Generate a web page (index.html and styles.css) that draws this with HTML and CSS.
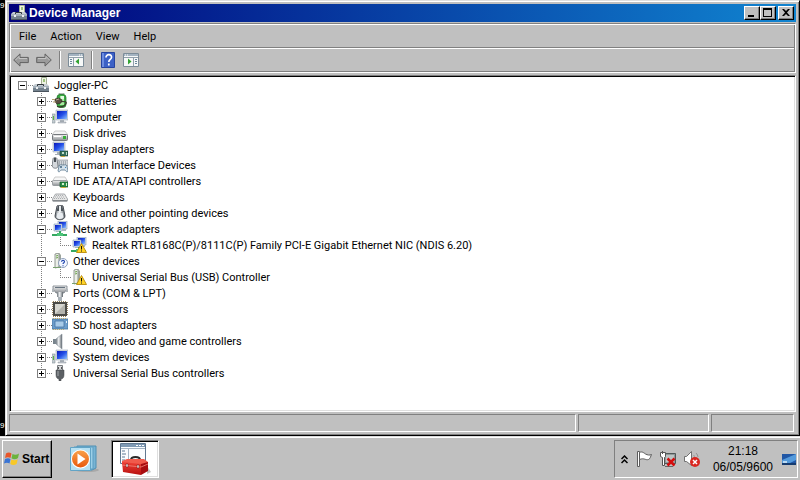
FILE: index.html
```html
<!DOCTYPE html>
<html lang="en">
<head>
    <meta charset="UTF-8">
    <meta name="viewport" content="width=device-width, initial-scale=1.0">
    <title>Device Manager</title>
    <link rel="stylesheet" href="styles.css">
</head>
<body>
    <!-- Icon definitions -->
    <svg class="defs" aria-hidden="true">
        <defs>
            <linearGradient id="screen" x1="0" y1="0" x2="1" y2="1">
                <stop offset="0" stop-color="#0a18b8"/><stop offset=".5" stop-color="#2450e8"/><stop offset="1" stop-color="#8fc4ff"/>
            </linearGradient>
            <linearGradient id="metal" x1="0" y1="0" x2="0" y2="1">
                <stop offset="0" stop-color="#f4f4f4"/><stop offset="1" stop-color="#8c9094"/>
            </linearGradient>
            <linearGradient id="steel" x1="0" y1="0" x2="1" y2="0">
                <stop offset="0" stop-color="#70787e"/><stop offset=".45" stop-color="#f2f4f6"/><stop offset="1" stop-color="#5c646a"/>
            </linearGradient>
            <linearGradient id="orange" x1="0" y1="0" x2="0" y2="1">
                <stop offset="0" stop-color="#f9a04a"/><stop offset="1" stop-color="#e8590c"/>
            </linearGradient>
            <linearGradient id="red" x1="0" y1="0" x2="0" y2="1">
                <stop offset="0" stop-color="#ee4136"/><stop offset="1" stop-color="#b80f0f"/>
            </linearGradient>
        </defs>
        <symbol id="i-root" viewBox="0 0 16 16">
            <path d="M8.500.5h5v7h-5z" fill="#eef2e4" stroke="#a4b094"/><path d="M10 2h2v3h-2z" fill="#9cc47c"/>
            <path d="M2 7h12l2 2H0z" fill="#c4ccd2"/>
            <path d="M4.500 9V7.500h6V9" fill="none" stroke="#30363c"/>
            <path d="M0 9h16v6H0z" fill="#73818d"/><path d="M0 9h16v2H0z" fill="#a4b0ba"/><path d="M0 14h16v1H0z" fill="#4a545e"/>
            <path d="M3 10h2v2H3zM11 10h2v2h-2z" fill="#eef0f2"/>
        </symbol>
        <symbol id="i-battery" viewBox="0 0 16 16">
            <path d="M7 0h5v2H7z" fill="#c8d4c8" stroke="#708070" stroke-width=".5"/>
            <rect x="5" y="1.500" width="9" height="13" rx="3" fill="#3aac42" stroke="#1d6c24" stroke-width=".7"/>
            <path d="M8 3h4v9H8z" fill="#a8eaa0"/><path d="M9 3h3v3H9z" fill="#e4f8e0"/>
            <path d="M3 6l4-1 3 2-1 3-4 1-2-2z" fill="#5b5044" stroke="#2c241c" stroke-width=".6"/>
            <path d="M0 6.500h3M1 9h3" stroke="#b4a070"/><path d="M9 8.500c4 0 6 0 5 2s-4 4-9 3" fill="none" stroke="#3b342c" stroke-width="1.200"/>
            <path d="M4 7l3-1" stroke="#b4a894"/>
        </symbol>
        <symbol id="i-computer" viewBox="0 0 16 16">
            <path d="M4 1h12v10H4z" fill="#d4dae2" stroke="#9ca8b8" stroke-width=".6"/><path d="M5 2h10v8H5z" fill="url(#screen)"/>
            <path d="M8 11h4v2H8z" fill="#a8b0b8"/><path d="M6 13h8v1H6z" fill="#ced4da" stroke="#8c969e" stroke-width=".5"/>
            <path d="M0 5h3v9H0z" fill="#c4ccd0" stroke="#88949c" stroke-width=".6"/><path d="M1 7h1v4H1z" fill="#58b440"/>
        </symbol>
        <symbol id="i-disk" viewBox="0 0 16 16">
            <path d="M3 6h10l3 4H0z" fill="#f4f4f4" stroke="#b8b8b8" stroke-width=".7"/>
            <rect x=".5" y="9.500" width="15" height="6" rx="1" fill="url(#metal)" stroke="#74787c"/>
            <path d="M11 11h3v3h-3z" fill="#38b038"/><path d="M2 11.500h7" stroke="#fff"/>
        </symbol>
        <symbol id="i-display" viewBox="0 0 16 16">
            <path d="M1 1h12v10H1z" fill="#d4dae2" stroke="#9ca8b8" stroke-width=".6"/><path d="M2 2h10v8H2z" fill="url(#screen)"/>
            <path d="M5 11h4v2H5zM3 13h6v1H3z" fill="#a8b0b8"/>
            <path d="M8 10h8v5H8z" fill="#35715c" stroke="#153e30" stroke-width=".6"/><path d="M10 11h2v2h-2zM14 11h1v3h-1z" fill="#c0dccc"/><path d="M9 15h4v1H9z" fill="#c8a840"/>
        </symbol>
        <symbol id="i-hid" viewBox="0 0 16 16">
            <path d="M6 3h10v6H6z" fill="#d2d6da" stroke="#7c848c" stroke-width=".6"/><path d="M7 5h8M7 7h8" stroke="#7c848c" stroke-dasharray="1 1"/>
            <path d="M1 2c0-2 4-2 4 0l1 7c0 3-5 3-6 0z" fill="#d4d8dc" stroke="#666c72" stroke-width=".8"/><path d="M2 1h2v4H2z" fill="#4a5056"/>
            <path d="M7 9c1-2 2-1 4-1s3-1 4 1l1 5c-1 2-2 0-3-1H9c-1 1-2 3-3 1z" fill="#d2e0ea" stroke="#58758c" stroke-width=".8"/>
            <path d="M8 10h2M9 9v2" stroke="#3e607c"/><path d="M13 10h1v1h-1z" fill="#4488c0"/>
        </symbol>
        <symbol id="i-ide" viewBox="0 0 16 16">
            <path d="M3 4h10l3 5H0z" fill="#f6f6f6" stroke="#b8b8b8" stroke-width=".7"/>
            <rect x=".5" y="7.500" width="15" height="5" rx="1" fill="url(#metal)" stroke="#8c9094" stroke-width=".8"/>
            <path d="M8 9h8v5H8z" fill="#2a9048" stroke="#145428" stroke-width=".7"/><path d="M10 10h2v2h-2zM14 10h1v3h-1z" fill="#d4f0d0"/><path d="M9 14h5v1H9z" fill="#c8b040"/>
        </symbol>
        <symbol id="i-keyboard" viewBox="0 0 16 16">
            <path d="M3.500 5h9l3 5v2H.5v-2z" fill="#e6e6e6" stroke="#94989c" stroke-width=".8"/><path d="M1 11h14v1.500H1z" fill="#84888c"/>
            <path d="M4 6.500h8M3 8h10M2 9.500h12" stroke="#a4a8ac" stroke-dasharray="1 1" stroke-width=".9"/>
        </symbol>
        <symbol id="i-mouse" viewBox="0 0 16 16">
            <path d="M5 1c1-1 5-1 6 0l2 10c0 5-10 5-10 0z" fill="url(#steel)" stroke="#3c4248" stroke-width=".9"/>
            <path d="M4.500 6L6 1h1v5zM9 6V1h1l1.500 5z" fill="#4c535a"/><path d="M7 1h2v6H7z" fill="#e8ecee"/><path d="M5.500 8h5l1 4c-1 2-6 2-7 0z" fill="#e8ecf0"/>
        </symbol>
        <symbol id="i-net" viewBox="0 0 16 16">
            <path d="M6 0h9v8H6z" fill="#cfdae8" stroke="#8498b4" stroke-width=".6"/><path d="M7 1h7v6H7z" fill="url(#screen)"/>
            <path d="M2 3h8v7H2z" fill="#dbe4f0" stroke="#8498b4" stroke-width=".6"/><path d="M3 4h6v5H3z" fill="url(#screen)"/><path d="M4 10h4v1H4zM10 8h4v2h-4z" fill="#aab4c0"/>
            <path d="M7 10h2v3h6v2H0v-2h7z" fill="#35a860"/><path d="M5 12h6v3H5z" fill="#4cc47a"/>
        </symbol>
        <symbol id="i-warn" viewBox="0 0 16 16">
            <path d="M10.500 6.500L15.500 15.500h-10z" fill="#ffd326" stroke="#b98a08" stroke-width=".9" stroke-linejoin="round"/><path d="M10 9h1v3.500h-1zM10 13.500h1v1h-1z" fill="#111"/>
        </symbol>
        <symbol id="i-unknown" viewBox="0 0 16 16">
            <path d="M3 1l4-1v14l-4 1z" fill="#ecefe8" stroke="#788078" stroke-width=".8"/><path d="M7 0l2 2v12H7z" fill="#9ca49c"/><path d="M4 3l2-.5M4 5l2-.5" stroke="#68a048"/><path d="M1 14h8v1H1z" fill="#78a070"/>
        </symbol>
        <symbol id="i-question" viewBox="0 0 16 16">
            <circle cx="11" cy="10" r="4.500" fill="#f3f7ff" stroke="#8496b4" stroke-width=".9"/><path d="M9.500 8.800c0-2 3.200-1.800 3 0 0 1-1.500 1-1.500 2.300M11 12.200v1" fill="none" stroke="#2348b0" stroke-width="1.100"/>
        </symbol>
        <symbol id="i-port" viewBox="0 0 16 16">
            <path d="M1 1h14v3l-3 4H4L1 4z" fill="url(#metal)" stroke="#777f86" stroke-width=".8"/><path d="M3 2h10v1H3z" fill="#687480"/>
            <path d="M5 7h6v5H5z" fill="url(#steel)"/><path d="M6 12h4v4H6z" fill="#aab2b8"/><path d="M0 4h2v3H0zM14 4h2v3h-2z" fill="#b0b6ba"/>
        </symbol>
        <symbol id="i-cpu" viewBox="0 0 16 16">
            <path d="M.5 1v14M15.500 1v14M1 .5h14M1 15.500h14" stroke="#94805c" stroke-dasharray="1 1"/>
            <path d="M1 1h14v14H1z" fill="#4b4b48"/><path d="M3 3h10v10H3z" fill="#b4b4ae"/><path d="M3 3h10L3 13z" fill="#d6d6d0"/>
        </symbol>
        <symbol id="i-sd" viewBox="0 0 16 16">
            <path d="M0 2h16v10H0z" fill="#6d9dcb" stroke="#44749e" stroke-width=".8"/><path d="M3 4h9v6H3z" fill="#a9cbe8" stroke="#3b6c9c" stroke-width=".7"/><path d="M1 1.500h14M1 12.500h12" stroke="#bda768" stroke-dasharray="1 1"/><path d="M14 4h1v2h-1z" fill="#e4f0fa"/>
        </symbol>
        <symbol id="i-sound" viewBox="0 0 16 16">
            <path d="M1 6h4v5H1z" fill="#78848c"/><path d="M4 6l6-5v15l-6-5z" fill="url(#steel)" stroke="#8a959d" stroke-width=".6"/>
        </symbol>
        <symbol id="i-usb" viewBox="0 0 16 16">
            <path d="M5.500.5h5v5h-5z" fill="#d8dadc" stroke="#6c7074" stroke-width=".9"/><path d="M6 2h1v2H6zM9 2h1v2H9z" fill="#555"/>
            <path d="M4 5h8v5c0 3-2 4-3 4v2H7v-2c-1 0-3-1-3-4z" fill="#5c6064" stroke="#404448" stroke-width=".5"/><path d="M6 6v5" stroke="#a4a8ac"/>
        </symbol>
        <symbol id="i-back" viewBox="0 0 16 14">
            <path d="M.7 7L7 .9v3.500h8.300v5.200H7v3.500z" fill="#9b9b9b" stroke="#626262"/><path d="M2.500 7L6 3.500v2h8" fill="none" stroke="#c4c4c4"/>
        </symbol>
        <symbol id="i-pane" viewBox="0 0 16 14">
            <path d="M.5.500h15v13H.5z" fill="#f6f8f8" stroke="#7c8c98"/><path d="M1 1h14v2H1z" fill="#a3b3c1"/><path d="M11 2h1M13 2h1" stroke="#fff"/>
            <path d="M1 4.500h14M5.500 5v8" stroke="#91a0ac"/><path d="M2 6.500h2M2 8.500h2M2 10.500h2" stroke="#6c889c"/><path d="M11 5.500v6L7.500 8.500z" fill="#32a332"/>
        </symbol>
        <symbol id="i-help" viewBox="0 0 14 16">
            <path d="M.5.500h13v15H.5z" fill="#3c61c6" stroke="#2744a0"/><path d="M1 1h2v14H1z" fill="#6c8ce0"/>
            <path d="M5 5.500c0-4 6-3.500 5.500 0-.3 2-2.700 2-2.700 4.500M7.800 11.500v2" fill="none" stroke="#fff" stroke-width="1.700"/>
        </symbol>
    </svg>

    <main class="desktop">
        <span class="desktop-text">9</span>
        <span class="desktop-text">9</span>

        <section class="window">
            <header class="titlebar">
                <svg class="icon"><use href="#i-root"/></svg>
                <h1>Device Manager</h1>
                <div class="window-controls">
                    <button aria-label="Minimize"><svg viewBox="0 0 12 10"><path d="M2 7h6v2H2z"/></svg></button>
                    <button aria-label="Maximize"><svg viewBox="0 0 12 10"><path d="M1 0h9v9H1zM2 2v6h7V2z" fill-rule="evenodd"/></svg></button>
                    <button class="close" aria-label="Close"><svg viewBox="0 0 12 10"><path d="M2 1h2l2 2 2-2h2L7 4.500 10 8H8L6 6 4 8H2l3-3.500z"/></svg></button>
                </div>
            </header>

            <div class="bars">
                <nav class="menu">
                    <button>File</button>
                    <button>Action</button>
                    <button>View</button>
                    <button>Help</button>
                </nav>
                <div class="toolbar">
                    <button aria-label="Back"><svg class="tool"><use href="#i-back"/></svg></button>
                    <button aria-label="Forward"><svg class="tool flip"><use href="#i-back"/></svg></button>
                    <span class="separator"></span>
                    <button aria-label="Show or hide console tree"><svg class="tool"><use href="#i-pane"/></svg></button>
                    <span class="separator"></span>
                    <button aria-label="Help"><svg class="tool"><use href="#i-help"/></svg></button>
                    <button aria-label="Show or hide action pane"><svg class="tool flip"><use href="#i-pane"/></svg></button>
                </div>
            </div>

            <!-- Device tree -->
            <div class="tree-view">
                <ul class="tree">
                    <li>
                        <div class="row"><button class="toggle open" aria-label="Collapse"></button><svg class="icon"><use href="#i-root"/></svg><span>Joggler-PC</span></div>
                        <ul>
                            <li><div class="row"><button class="toggle" aria-label="Expand"></button><svg class="icon"><use href="#i-battery"/></svg><span>Batteries</span></div></li>
                            <li><div class="row"><button class="toggle" aria-label="Expand"></button><svg class="icon"><use href="#i-computer"/></svg><span>Computer</span></div></li>
                            <li><div class="row"><button class="toggle" aria-label="Expand"></button><svg class="icon"><use href="#i-disk"/></svg><span>Disk drives</span></div></li>
                            <li><div class="row"><button class="toggle" aria-label="Expand"></button><svg class="icon"><use href="#i-display"/></svg><span>Display adapters</span></div></li>
                            <li><div class="row"><button class="toggle" aria-label="Expand"></button><svg class="icon"><use href="#i-hid"/></svg><span>Human Interface Devices</span></div></li>
                            <li><div class="row"><button class="toggle" aria-label="Expand"></button><svg class="icon"><use href="#i-ide"/></svg><span>IDE ATA/ATAPI controllers</span></div></li>
                            <li><div class="row"><button class="toggle" aria-label="Expand"></button><svg class="icon"><use href="#i-keyboard"/></svg><span>Keyboards</span></div></li>
                            <li><div class="row"><button class="toggle" aria-label="Expand"></button><svg class="icon"><use href="#i-mouse"/></svg><span>Mice and other pointing devices</span></div></li>
                            <li>
                                <div class="row"><button class="toggle open" aria-label="Collapse"></button><svg class="icon"><use href="#i-net"/></svg><span>Network adapters</span></div>
                                <ul>
                                    <li><div class="row leaf"><svg class="icon"><use href="#i-net"/><use href="#i-warn"/></svg><span>Realtek RTL8168C(P)/8111C(P) Family PCI-E Gigabit Ethernet NIC (NDIS 6.20)</span></div></li>
                                </ul>
                            </li>
                            <li>
                                <div class="row"><button class="toggle open" aria-label="Collapse"></button><svg class="icon"><use href="#i-unknown"/><use href="#i-question"/></svg><span>Other devices</span></div>
                                <ul>
                                    <li><div class="row leaf"><svg class="icon"><use href="#i-unknown"/><use href="#i-warn"/></svg><span>Universal Serial Bus (USB) Controller</span></div></li>
                                </ul>
                            </li>
                            <li><div class="row"><button class="toggle" aria-label="Expand"></button><svg class="icon"><use href="#i-port"/></svg><span>Ports (COM &amp; LPT)</span></div></li>
                            <li><div class="row"><button class="toggle" aria-label="Expand"></button><svg class="icon"><use href="#i-cpu"/></svg><span>Processors</span></div></li>
                            <li><div class="row"><button class="toggle" aria-label="Expand"></button><svg class="icon"><use href="#i-sd"/></svg><span>SD host adapters</span></div></li>
                            <li><div class="row"><button class="toggle" aria-label="Expand"></button><svg class="icon"><use href="#i-sound"/></svg><span>Sound, video and game controllers</span></div></li>
                            <li><div class="row"><button class="toggle" aria-label="Expand"></button><svg class="icon"><use href="#i-computer"/></svg><span>System devices</span></div></li>
                            <li><div class="row"><button class="toggle" aria-label="Expand"></button><svg class="icon"><use href="#i-usb"/></svg><span>Universal Serial Bus controllers</span></div></li>
                        </ul>
                    </li>
                </ul>
            </div>

            <footer class="status">
                <div></div>
                <div></div>
                <div></div>
            </footer>
        </section>
    </main>

    <!-- Taskbar -->
    <div class="taskbar">
        <button class="start">
            <svg viewBox="0 0 16 16">
                <path d="M2 2.500C4 1 6 1.500 7.500 2.500L6.500 7C5 6 3 6 1 7z" fill="#e8562a"/><path d="M8.500 3C10.500 4 12.500 4 15 2.500L14 7C12 8.500 9.500 8.500 7.500 7.300z" fill="#6cb33c"/>
                <path d="M1 8C3 7 5 7 6.500 8L5.500 12.500C4 11.500 2 11.500 0 12.500z" fill="#3a74d4"/><path d="M7.300 8.500C9.500 9.500 11.500 9.500 13.800 8.200L12.600 13C10.500 14.300 8.500 14.300 6.300 13z" fill="#f8c828"/>
            </svg>
            Start
        </button>
        <button class="task" aria-label="Windows Media Player">
            <svg viewBox="0 0 30 30">
                <ellipse cx="18" cy="26" rx="12" ry="2" fill="#a8a8a8"/>
                <path d="M8 2h19v22l-4 2H8z" fill="#78b4d4" stroke="#4f90b4"/><path d="M5 3h19v22H5z" fill="#9cd0e8" stroke="#5c9cc0"/>
                <path d="M1.500 3.500h20v23h-20z" fill="#b6e0f2" stroke="#62a4c6"/><circle cx="11.500" cy="15" r="9.500" fill="#fff"/>
                <circle cx="11.500" cy="15" r="8.500" fill="url(#orange)"/><path d="M8.500 9.500v11l8-5.500z" fill="#fff"/>
            </svg>
        </button>
        <button class="task active" aria-label="Device Manager">
            <svg viewBox="0 0 32 32">
                <path d="M28 23l4 6-4 2z" fill="#c4c4c4"/>
                <path d="M1.500.500h25v20h-25z" fill="#fafcfe" stroke="#607890"/><path d="M2 1h24v3H2z" fill="#7f9ab4"/><path d="M17 2.500h8" stroke="#fff" stroke-dasharray="2 1"/>
                <path d="M2 5.500h24M9.500 6v14" stroke="#a4b4c4"/><path d="M3 8h3M3 11h4M3 14h3M3 17h3" stroke="#5d7893"/>
                <path d="M12 17c0-4 9-4 9 0" fill="none" stroke="#282828" stroke-width="2"/>
                <path d="M3 18l5-2h17l4 3v3H3z" fill="#f05a4c"/><path d="M3 19l19 2v11L4 29z" fill="url(#red)"/><path d="M22 21l7-2v9l-7 4z" fill="#a80c10"/>
                <path d="M3 22l19 2 7-3" fill="none" stroke="#f18478" stroke-width=".8"/><path d="M7 21h2v3H7zM18 22h2v3h-2z" fill="#ececec" stroke="#701010" stroke-width=".5"/>
            </svg>
        </button>
        <div class="tray">
            <button class="chevrons" aria-label="Show hidden icons"><svg viewBox="0 0 7 9"><path d="M.5 4l3-3 3 3M.5 8l3-3 3 3" fill="none" stroke="#000" stroke-width="1.500"/></svg></button>
            <button aria-label="Action Center"><svg viewBox="0 0 16 16"><path d="M1.500.500h2v15h-2z" fill="#fff" stroke="#5c5c5c"/><path d="M3.500 1.500C6 0 8 2 9.500 3c2 1 4 1.500 6 .5-1 2-1 4-3 5-3 1-4-2-9 0z" fill="#fff" stroke="#5c5c5c"/></svg></button>
            <button aria-label="Network disconnected"><svg viewBox="0 0 16 16"><path d="M4.500 2.500h11v10h-11z" fill="#909898" stroke="#505858"/><path d="M6 4h8v7H6z" fill="#bcc4c4"/><path d="M5 15h8v1H5z" fill="#666"/><path d="M.5 1.500h5v4l-1 1v8h-2v-8l-2-1z" fill="#fff" stroke="#555"/><path d="M2.500 0v3" stroke="#555"/><path d="M7.500 7.500l7 7M14.500 7.500l-7 7" stroke="#d40c0c" stroke-width="2.500"/></svg></button>
            <button aria-label="Volume"><svg viewBox="0 0 16 16"><path d="M.5 5.500h2l5-5v14l-5-4h-2z" fill="#fff" stroke="#707070"/><path d="M9.500 4c1 1 1 2 1 3M12 2c1 1 2 3 2 4" fill="none" stroke="#909090"/><circle cx="11" cy="11" r="5" fill="#d92720"/><path d="M9 9l4 4M13 9l-4 4" stroke="#fff" stroke-width="1.500"/></svg></button>
            <div class="clock"><time>21:18</time><span>06/05/9600</span></div>
            <button aria-label="Show desktop"><svg viewBox="0 0 16 16"><path d="M1 3h14v11H1z" fill="#2157a5"/><path d="M1 9L15 3v6L5 14H1z" fill="#559bdc"/><path d="M1 12h14v2H1z" fill="#163c70"/><path d="M2 10h4v2H2z" fill="#bcdcf4"/></svg></button>
        </div>
    </div>
</body>
</html>
```

FILE: styles.css
```css
* {
    box-sizing: border-box;
}
body {
    margin: 0;
    height: 100vh;
    display: flex;
    flex-direction: column;
    background-color: #000;
    color: #000;
    font-family: "Liberation Sans", Arial, sans-serif;
    font-size: 12px;
    line-height: 16px;
    overflow: hidden;
}
button {
    font: inherit;
    color: inherit;
    padding: 0;
    border: none;
    background: none;
}
svg {
    display: block;
}
.defs {
    position: absolute;
    width: 0;
    height: 0;
}
.icon {
    width: 16px;
    height: 16px;
    flex: none;
}

/* Desktop */
.desktop {
    flex: 1;
    min-height: 0;
    display: grid;
    grid-template-columns: 5px 1fr;
    grid-template-rows: 1fr auto;
}
.desktop-text {
    grid-column: 1;
    color: #fff;
    font-size: 8px;
    line-height: 12px;
    padding-bottom: 4px;
}

/* Window */
.window {
    grid-column: 2;
    grid-row: 1 / 3;
    min-height: 0;
    display: flex;
    flex-direction: column;
    padding: 3px;
    background-color: #c0c0c0;
    border: 1px solid;
    border-color: #dfdfdf #000 #000 #dfdfdf;
    box-shadow: inset 1px 1px #fff, inset -1px -1px #808080;
}
.titlebar {
    display: flex;
    align-items: center;
    height: 18px;
    padding: 0 2px;
    color: #fff;
    background: linear-gradient(to right, #00007b, #1084d0);
}
.titlebar h1 {
    flex: 1;
    margin: 0 0 0 2px;
    font-size: 12px;
}
.window-controls {
    display: flex;
}
.window-controls button {
    width: 16px;
    height: 14px;
    padding: 1px;
    background-color: #c0c0c0;
    border: 1px solid;
    border-color: #fff #000 #000 #fff;
    box-shadow: inset -1px -1px #808080;
}
.window-controls .close {
    margin-left: 2px;
}
.window-controls svg {
    width: 12px;
    height: 10px;
}

/* Menu and toolbar */
.bars {
    margin-top: 1px;
    border: 1px solid;
    border-color: #808080 #fff #fff #808080;
    box-shadow: inset 1px 1px #fff, inset -1px -1px #808080;
    padding: 1px;
}
.menu {
    display: flex;
    height: 23px;
    padding: 1px 1px 0;
    border-bottom: 1px solid #808080;
    font-family: Roboto, Arial, sans-serif;
    font-size: 11px;
}
.menu button {
    padding: 0 7px;
}
.toolbar {
    display: flex;
    align-items: center;
    height: 23px;
    padding: 0 2px;
    gap: 7px;
    border-top: 1px solid #fff;
}
.tool {
    width: 16px;
    height: 16px;
}
.flip {
    transform: scaleX(-1);
}
.separator {
    width: 2px;
    height: 18px;
    background-color: #808080;
    border-right: 1px solid #fff;
}

/* Tree */
.tree-view {
    flex: 1;
    min-height: 0;
    overflow: hidden;
    margin-top: 2px;
    padding: 0 2px;
    background-color: #fff;
    border: 1px solid;
    border-color: #808080 #fff #fff #808080;
    box-shadow: inset 1px 1px #000, inset -1px -1px #dfdfdf;
    font-family: Roboto, Arial, sans-serif;
    font-size: 11px;
}
.tree,
.tree ul {
    list-style: none;
    margin: 0;
    padding: 0;
}
.tree {
    padding: 1px;
}
.tree ul {
    padding-left: 19px;
}
.tree ul li {
    background: repeating-linear-gradient(to bottom, #808080 0 1px, transparent 1px 2px) 9px 0 / 1px 100% no-repeat;
}
.tree ul li:last-child {
    background-size: 1px 8px;
}
.row {
    display: flex;
    align-items: center;
    height: 16px;
    padding-left: 5px;
    white-space: nowrap;
    background: repeating-linear-gradient(to right, #808080 0 1px, transparent 1px 2px) 9px 8px / 11px 1px no-repeat;
}
.row span {
    margin-left: 5px;
    padding-top: 2px;
}
.leaf {
    padding-left: 20px;
}
.toggle {
    width: 9px;
    height: 9px;
    margin-right: 6px;
    border: 1px solid #808080;
    background:
        linear-gradient(#000, #000) center / 5px 1px no-repeat,
        linear-gradient(#000, #000) center / 1px 5px no-repeat,
        #fff;
}
.toggle.open {
    background: linear-gradient(#000, #000) center / 5px 1px no-repeat, #fff;
}

/* Status bar */
.status {
    display: grid;
    grid-template-columns: 1fr 131px 83px;
    gap: 2px;
    height: 18px;
    margin: 2px 2px 0 0;
}
.status div {
    border: 1px solid;
    border-color: #808080 #fff #fff #808080;
}

/* Taskbar */
.taskbar {
    display: flex;
    height: 44px;
    padding: 3px 2px 2px;
    background-color: #c0c0c0;
    border-top: 1px solid #dfdfdf;
    box-shadow: inset 0 1px #fff;
}
.start {
    display: flex;
    align-items: center;
    gap: 2px;
    padding: 0 2px 0 1px;
    font-weight: bold;
    border: 1px solid;
    border-color: #fff #000 #000 #fff;
    box-shadow: inset -1px -1px #808080;
}
.start svg {
    width: 16px;
    height: 16px;
}
.task {
    display: flex;
    align-items: center;
    justify-content: center;
    width: 48px;
    margin-left: 8px;
}
.task svg {
    width: 30px;
    height: 30px;
}
.task.active {
    margin-left: 3px;
    background-color: #fff;
    border: 1px solid;
    border-color: #808080 #fff #fff #808080;
    box-shadow: inset 1px 1px #000, inset -1px -1px #dfdfdf;
}
.task.active svg {
    width: 32px;
    height: 32px;
}
.tray {
    display: flex;
    align-items: center;
    gap: 8px;
    margin-left: auto;
    padding-left: 6px;
    border: 1px solid;
    border-color: #808080 #fff #fff #808080;
}
.tray svg {
    width: 16px;
    height: 16px;
}
.tray .chevrons svg {
    width: 7px;
    height: 9px;
}
.clock {
    display: flex;
    flex-direction: column;
    align-items: center;
    padding-left: 5px;
}
```
